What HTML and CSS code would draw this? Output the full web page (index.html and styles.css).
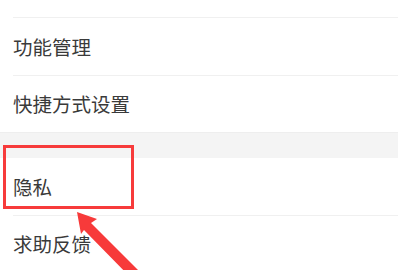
FILE: index.html
```html
<!DOCTYPE html>
<html lang="zh-CN">
<head>
<meta charset="utf-8">
<link rel="stylesheet" href="styles.css">
</head>
<body>
<div class="page">
  <div class="group">
    <div class="item item-partial"><div class="inner"></div></div>
    <div class="item"><div class="inner"><span class="label">功能管理</span></div></div>
    <div class="item"><div class="inner last"><span class="label">快捷方式设置</span></div></div>
  </div>
  <div class="gap"></div>
  <div class="group">
    <div class="item"><div class="inner"><span class="label">隐私</span></div></div>
    <div class="item"><div class="inner last"><span class="label">求助反馈</span></div></div>
  </div>
  <div class="highlight"></div>
  <svg class="arrow" width="100" height="70" viewBox="0 0 100 70">
    <polygon points="7,4 27,11 21,15 72,66 64,73 14,22 11,26" fill="#f73a3a"/>
  </svg>
</div>
</body>
</html>
```
FILE: styles.css
```css
html, body {
  margin: 0;
  padding: 0;
  background: #ffffff;
}
.page {
  position: relative;
  width: 398px;
  height: 270px;
  overflow: hidden;
  font-family: "Noto Sans CJK SC", "Noto Sans", sans-serif;
  color: #3a3a3a;
}
.group {
  background: #ffffff;
}
.item {
  padding-left: 13px;
}
.inner {
  height: 57px;
  border-bottom: 1px solid #f0f0f0;
  display: flex;
  align-items: center;
}
.inner.last {
  height: 56px;
  border-bottom: none;
}
.item-partial .inner {
  height: 17px;
}
.label {
  font-size: 19.5px;
  line-height: 1;
}
.gap {
  height: 25px;
  background: #f4f4f4;
  border-top: 1px solid #eeeeee;
}
.highlight {
  position: absolute;
  left: 3px;
  top: 145px;
  width: 125px;
  height: 58px;
  border: 3px solid #f73b3b;
}
.arrow {
  position: absolute;
  left: 70px;
  top: 208px;
}
```
